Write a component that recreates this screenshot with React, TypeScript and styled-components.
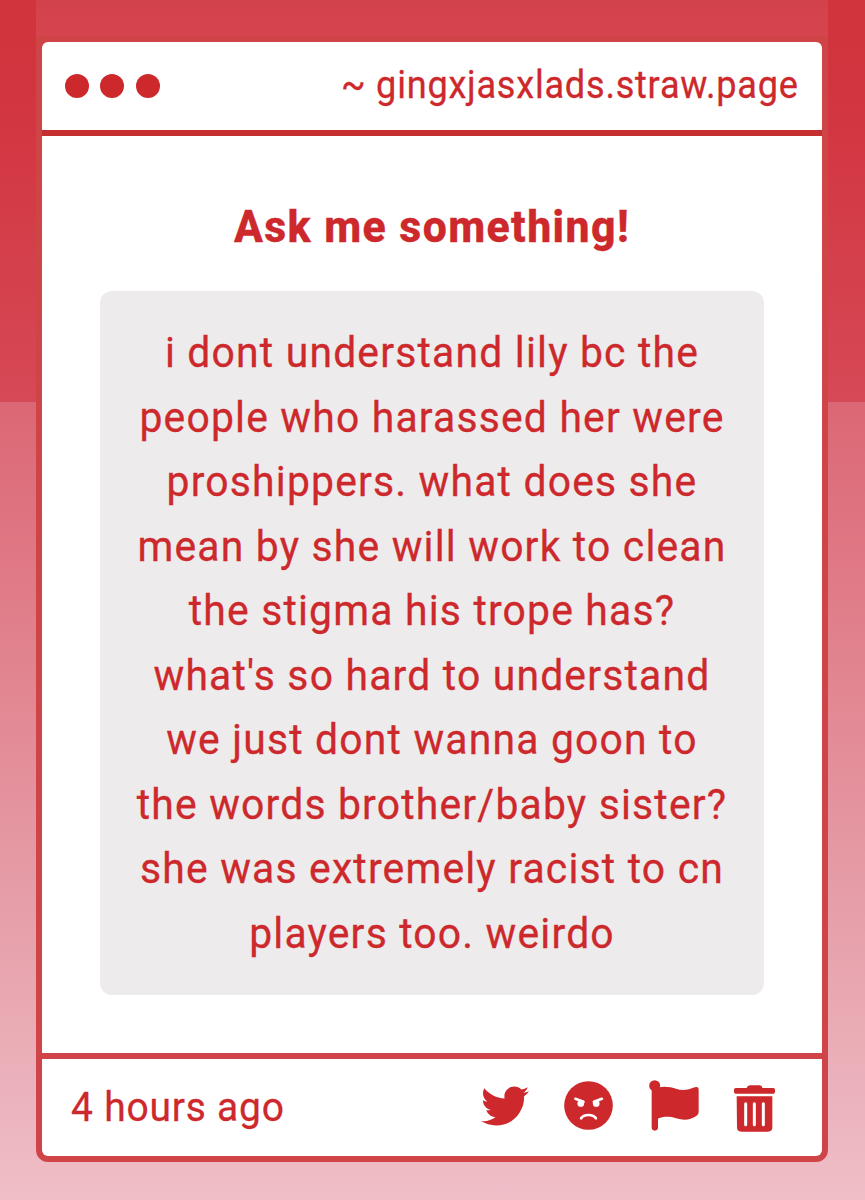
import React from "react";
import styled, { createGlobalStyle } from "styled-components";
import { FaTwitter } from "react-icons/fa";

const RED = "#cd292c";

const GlobalStyle = createGlobalStyle`
  * { box-sizing: border-box; }
  body { margin: 0; font-family: Roboto, "Liberation Sans", sans-serif; color: ${RED}; }
`;

const Page = styled.main`
  height: 1200px;
  padding: 0 37px 38px 36px;
  display: flex;
  flex-direction: column;
  overflow: hidden;
  background:
    linear-gradient(#d2343d 0, #d2353f 100px, #d64956 402px) top / 100% 402px no-repeat,
    linear-gradient(#dc6774 402px, #e6a0aa 920px, #efbec7 1200px);
`;

const Backdrop = styled.div`
  flex: none;
  height: 36px;
  background: linear-gradient(#d2424c, #d6444f);
`;

const Card = styled.article`
  flex: 1;
  display: flex;
  flex-direction: column;
  border: 6px solid #cf4446;
  border-radius: 0 0 12px 12px;
  background: #cf4446;
`;

const TitleBar = styled.header`
  flex: none;
  height: 94px;
  padding: 0 23px;
  display: flex;
  align-items: center;
  justify-content: space-between;
  background: #fff;
  border-bottom: 6px solid #c62f30;
  border-radius: 6px 6px 0 0;
`;

const Dots = styled.div`
  display: flex;
  gap: 11.4px;
`;

const Dot = styled.span`
  width: 24px;
  height: 24px;
  border-radius: 50%;
  background: ${RED};
`;

/* Slightly condensed lettering shared by all the card's text. */
const Condensed = styled.span<{ $origin?: string }>`
  display: block;
  white-space: nowrap;
  transform: scaleX(0.95);
  transform-origin: ${({ $origin = "center" }) => $origin};
  -webkit-text-stroke: 0.3px currentColor;
`;

const Address = styled(Condensed)`
  padding-bottom: 2px;
  font-size: 38px;
  line-height: 44px;
  letter-spacing: 0.8px;
`;

const Content = styled.section`
  flex: 1;
  padding: 64px 58px 0;
  background: #fff;
`;

const Heading = styled.h1`
  margin: 0;
  font-size: 45px;
  font-weight: 800;
  line-height: 54px;
  letter-spacing: 1.5px;
  text-align: center;
`;

const Message = styled.p`
  margin: 37px 0 0;
  height: 704px;
  padding: 29px 0;
  border-radius: 12px;
  background: #edebec;
  font-size: 43px;
  line-height: 64.5px;
  letter-spacing: 1.25px;
  text-align: center;
`;

const Footer = styled.footer`
  flex: none;
  height: 103px;
  padding: 0 47px 0 29px;
  display: flex;
  align-items: center;
  justify-content: space-between;
  background: #fff;
  border-top: 6px solid #cf4446;
  border-radius: 0 0 6px 6px;
`;

const Time = styled(Condensed)`
  padding-bottom: 1px;
  font-size: 41px;
  line-height: 48px;
  letter-spacing: 0.85px;
`;

const Actions = styled.div`
  display: flex;
  align-items: center;
  gap: 35.5px;
  padding-bottom: 4px;
`;

const Action = styled.button<{ $drop?: number }>`
  display: flex;
  padding: ${({ $drop = 0 }) => $drop}px 0 0;
  border: 0;
  background: none;
  color: ${RED};
`;

const Angry = () => (
  <svg width="49" height="49" viewBox="284 62 146 146">
    <circle cx="357" cy="135" r="72.5" fill="currentColor" />
    <g stroke="#fff" strokeLinecap="round" fill="none">
      <path d="M318 115L342 124M397 115L373 124" strokeWidth="8" />
      <path d="M335 173C343 160 371 160 379 173" strokeWidth="8" />
    </g>
    <circle cx="334" cy="129" r="10" fill="#fff" />
    <circle cx="380" cy="129" r="10" fill="#fff" />
  </svg>
);

const Flag = () => (
  <svg width="50" height="51" viewBox="58 59 150 153" fill="currentColor">
    <circle cx="75" cy="76" r="16.5" />
    <path d="M66 80H85V201Q85 211 75.500 211Q66 211 66 201Z" />
    <path d="M84 82C104 77 122 80 141 86C160 92 178 88 195 81Q207 77 207 88V155Q207 162 201 166C180 181 161 180 139 174C118 168 104 168 84 175Z" />
  </svg>
);

const Trash = () => (
  <svg width="41" height="47" viewBox="312 74 123 141">
    <path
      fill="currentColor"
      d="M317 83H350Q352 75 360 75H388Q396 75 397 83H430Q435 83 435 88V95Q435 100 430 100H317Q312 100 312 95V88Q312 83 317 83ZM320 108H427V201Q427 214 414 214H334Q321 214 321 201Z"
    />
    <path d="M347 130V193M373 130V193M400 130V193" stroke="#fff" strokeWidth="9" strokeLinecap="round" />
  </svg>
);

const lines = [
  "i dont understand lily bc the",
  "people who harassed her were",
  "proshippers. what does she",
  "mean by she will work to clean",
  "the stigma his trope has?",
  "what's so hard to understand",
  "we just dont wanna goon to",
  "the words brother/baby sister?",
  "she was extremely racist to cn",
  "players too. weirdo",
];

export default function App() {
  return (
    <>
      <GlobalStyle />
      <Page>
        <Backdrop />
        <Card>
          <TitleBar>
            <Dots>
              <Dot />
              <Dot />
              <Dot />
            </Dots>
            <Address $origin="right">~ gingxjasxlads.straw.page</Address>
          </TitleBar>
          <Content>
            <Heading>
              <Condensed>Ask me something!</Condensed>
            </Heading>
            <Message>
              {lines.map((line) => (
                <Condensed key={line}>{line} </Condensed>
              ))}
            </Message>
          </Content>
          <Footer>
            <Time as="time" $origin="left">4 hours ago</Time>
            <Actions>
              <Action aria-label="Share on Twitter"><FaTwitter size={48} /></Action>
              <Action aria-label="Block"><Angry /></Action>
              <Action aria-label="Report"><Flag /></Action>
              <Action aria-label="Delete" $drop={5}><Trash /></Action>
            </Actions>
          </Footer>
        </Card>
      </Page>
    </>
  );
}
